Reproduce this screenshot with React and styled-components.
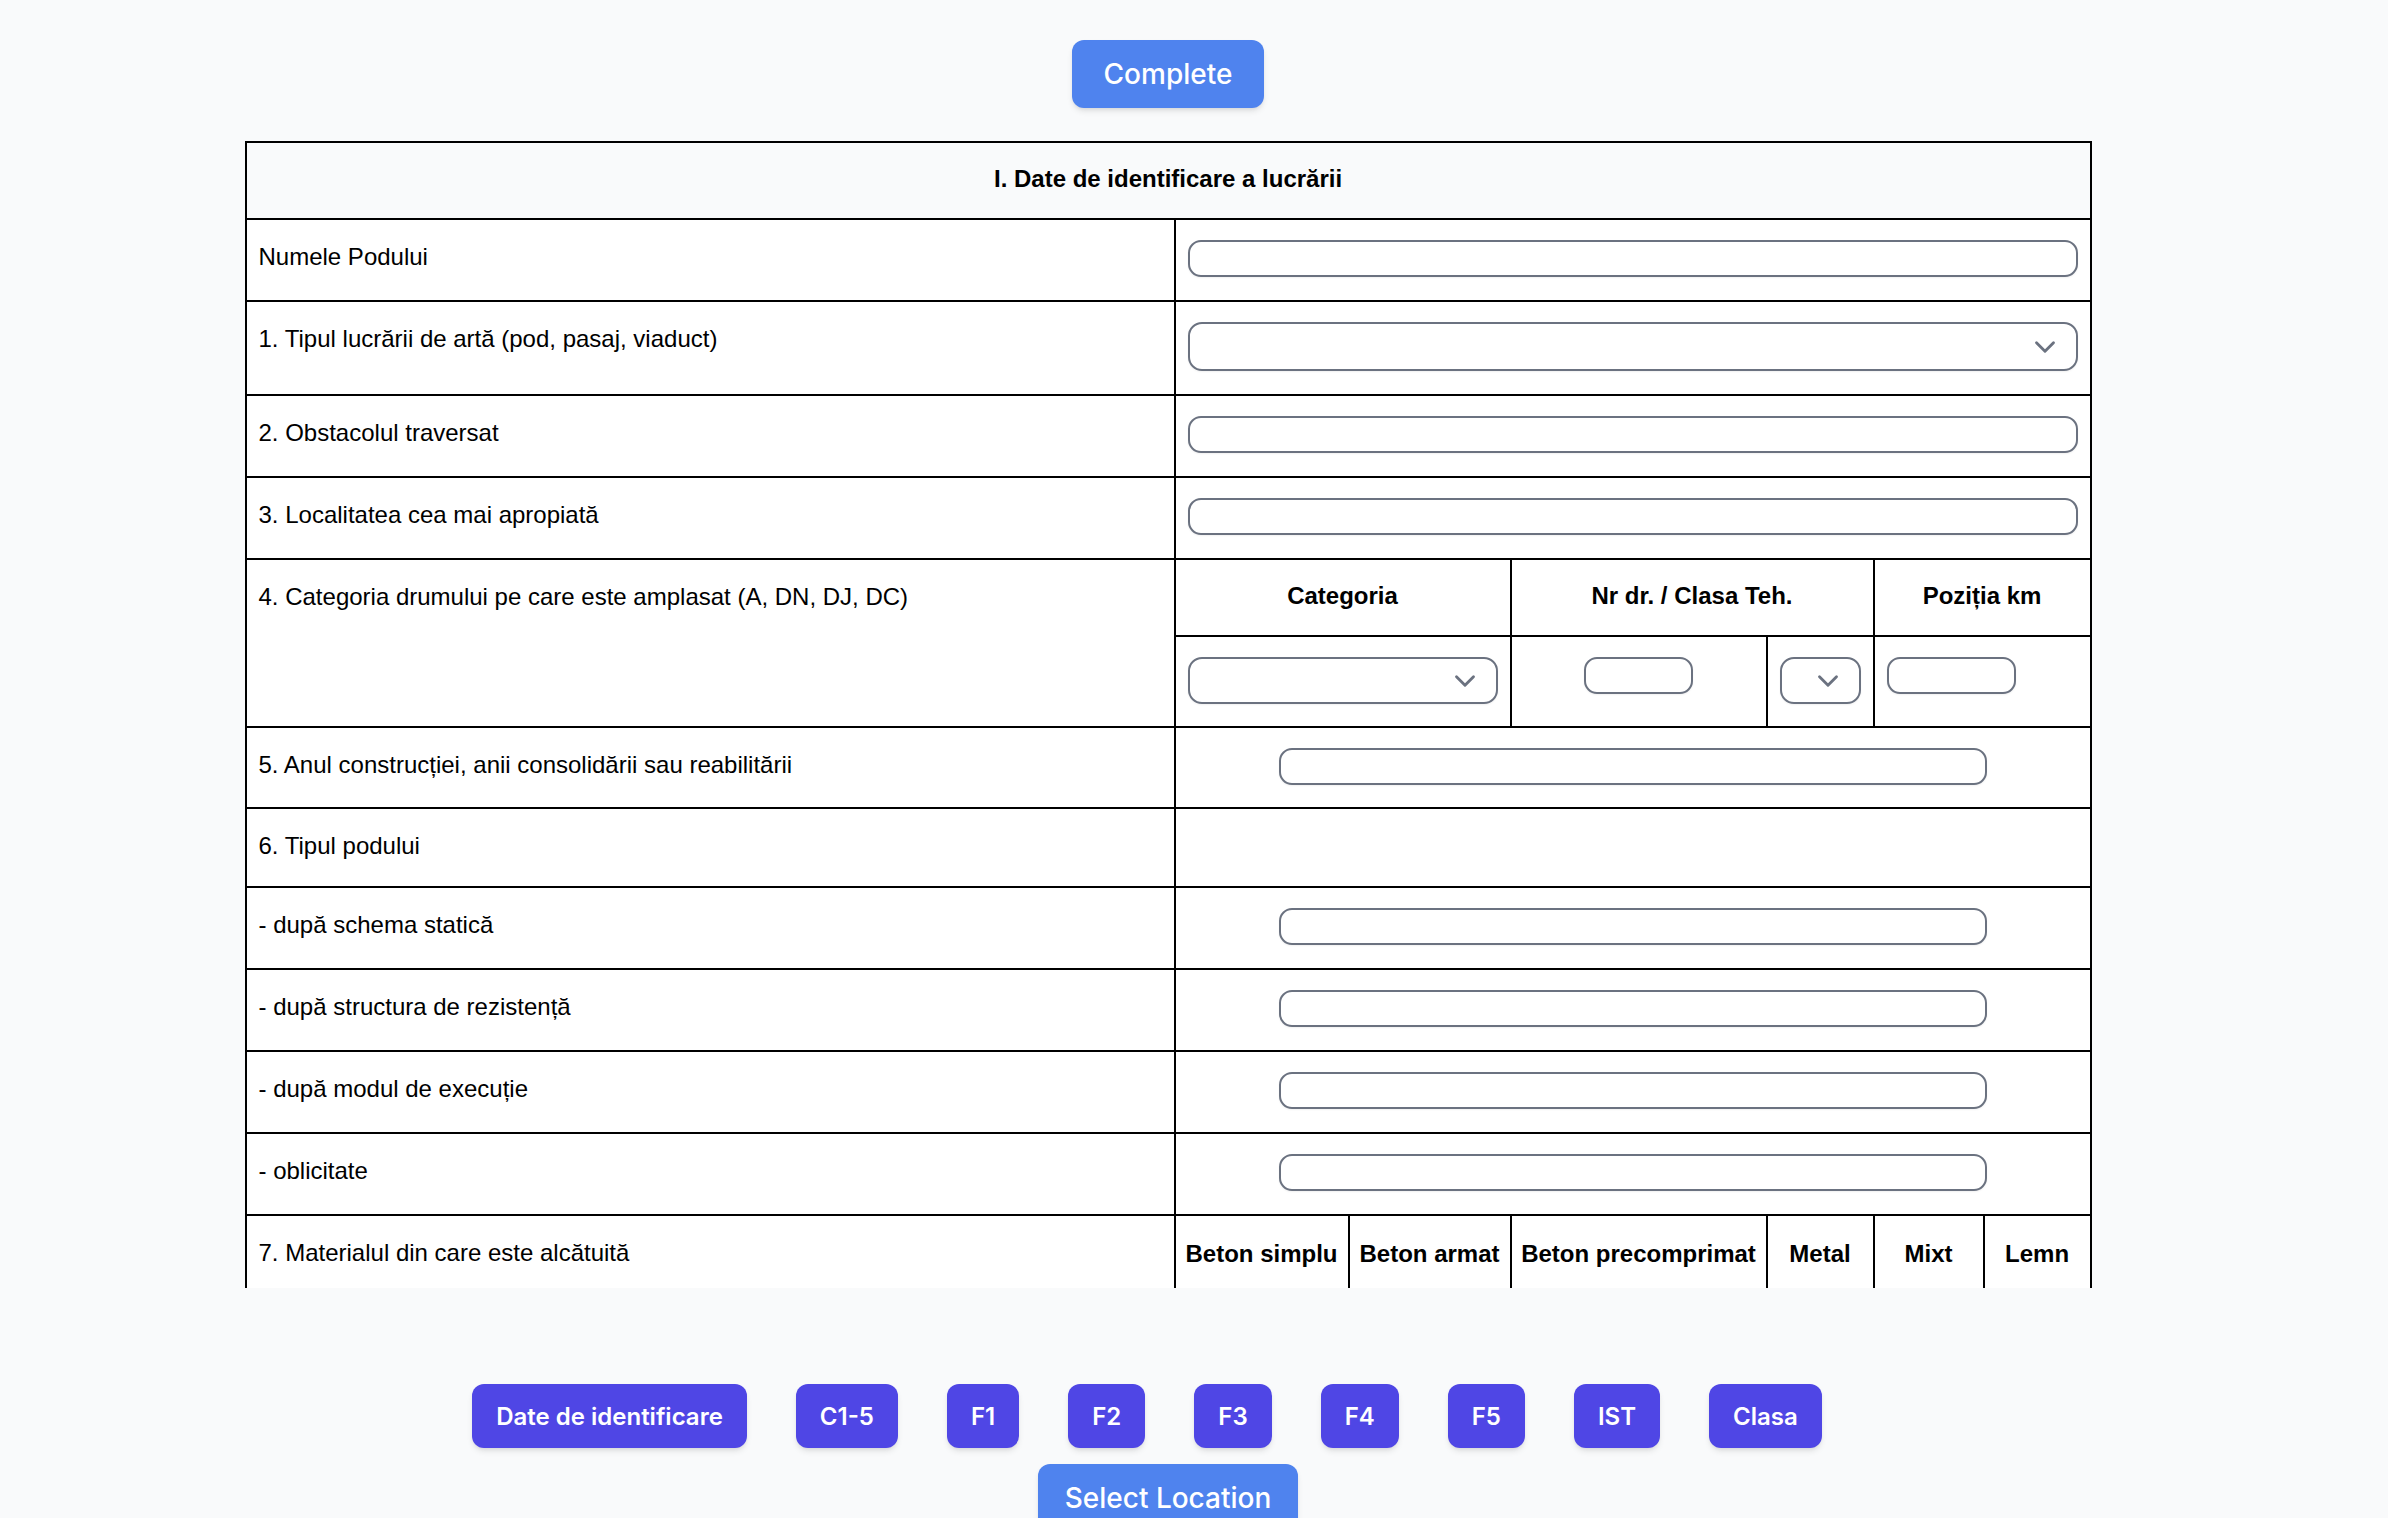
import React from "react";
import styled, { createGlobalStyle } from "styled-components";
import { ChevronDown } from "lucide-react";

const GlobalStyle = createGlobalStyle`
  body {
    margin: 0;
    background: #f9fafb;
    font-family: "Liberation Sans", Arial, sans-serif;
  }
  * {
    box-sizing: border-box;
  }
`;

const Page = styled.div`
  display: flex;
  flex-direction: column;
  align-items: center;
  padding: 40px 52px 0 0;
  min-height: 100vh;
`;

const PrimaryButton = styled.button`
  height: 68px;
  padding: 0 ${(p) => p.$padX || "32px"};
  border: none;
  border-radius: 12px;
  background: #4f83ee;
  color: #fff;
  font-family: Inter, "Noto Sans", sans-serif;
  font-size: 28px;
  font-weight: 500;
  box-shadow: 0 4px 6px -1px rgba(0, 0, 0, 0.1), 0 2px 4px -2px rgba(0, 0, 0, 0.1);
  cursor: pointer;
  margin-top: ${(p) => p.$top || "0"};
`;

// scroll box around the form, the table is cut off at the bottom
const TableScroll = styled.div`
  margin-top: 32px;
  width: 1849px;
  height: 1148px;
  padding: 1px 2px 0 1px;
  overflow-y: auto;
  scrollbar-width: none;
  &::-webkit-scrollbar {
    display: none;
  }
`;

const FormTable = styled.table`
  width: 1845px;
  border-collapse: collapse;
  table-layout: fixed;
  background: #fff;
  font-family: "Liberation Sans", Arial, sans-serif;
  font-size: 24px;
  color: #000;
`;

const Th = styled.th`
  border: 2px solid #000;
  padding: ${(p) => (p.$tight ? "20px 4px 22px" : "19px 12px 22px")};
  line-height: 34px;
  font-weight: 700;
  text-align: center;
  white-space: nowrap;
  background: ${(p) => (p.$shade ? "#f9fafb" : "#fff")};
`;

const Td = styled.td`
  border: 2px solid #000;
  padding: ${(p) => (p.$compact ? "20px 12px 22px" : "20px 12px 23px")};
  line-height: 34px;
  vertical-align: top;
  text-align: left;
`;

const TextInput = styled.input`
  display: block;
  width: ${(p) => p.$w || "100%"};
  height: 37px;
  margin: ${(p) => (p.$center ? "0 auto" : "0")};
  border: 2px solid #6b7280;
  border-radius: 13px;
  background: #fff;
  box-shadow: 0 1px 2px rgba(0, 0, 0, 0.06);
  font-size: 22px;
  padding: 0 12px;
  outline: none;
`;

const SelectWrap = styled.div`
  position: relative;
  width: 100%;
`;

const Select = styled.select`
  display: block;
  width: 100%;
  height: ${(p) => (p.$compact ? "47px" : "49px")};
  border: 2px solid #6b7280;
  border-radius: 14px;
  background: #fff;
  box-shadow: 0 1px 2px rgba(0, 0, 0, 0.06);
  appearance: none;
  -webkit-appearance: none;
  font-size: 22px;
  padding: 0 12px;
  outline: none;
`;

const Chevron = styled(ChevronDown)`
  position: absolute;
  right: 16px;
  top: 50%;
  transform: translateY(-50%);
  color: #6b7280;
  pointer-events: none;
`;

const NavRow = styled.div`
  display: flex;
  gap: 49px;
  margin-top: 96px;
  padding-right: 42px;
`;

const NavButton = styled.button`
  height: 64px;
  padding: 0 24px;
  border: none;
  border-radius: 12px;
  background: #4f46e5;
  color: #fff;
  font-family: Inter, "Noto Sans", sans-serif;
  font-size: 24px;
  font-weight: 600;
  box-shadow: 0 4px 6px -1px rgba(0, 0, 0, 0.1), 0 2px 4px -2px rgba(0, 0, 0, 0.1);
  cursor: pointer;
`;

const Dropdown = ({ compact }) => (
  <SelectWrap>
    <Select defaultValue="" $compact={compact}>
      <option value=""></option>
    </Select>
    <Chevron size={34} strokeWidth={2} />
  </SelectWrap>
);

const simpleRows = ["2. Obstacolul traversat", "3. Localitatea cea mai apropiată"];

const typeRows = [
  "- după schema statică",
  "- după structura de rezistență",
  "- după modul de execuție",
  "- oblicitate",
];

const materials = [
  "Beton simplu",
  "Beton armat",
  "Beton precomprimat",
  "Metal",
  "Mixt",
  "Lemn",
];

const navItems = ["Date de identificare", "C1-5", "F1", "F2", "F3", "F4", "F5", "IST", "Clasa"];

export default function App() {
  return (
    <>
      <GlobalStyle />
      <Page>
        <PrimaryButton>Complete</PrimaryButton>

        <TableScroll>
          <FormTable>
            <colgroup>
              <col style={{ width: 929 }} />
              <col style={{ width: 174 }} />
              <col style={{ width: 162 }} />
              <col style={{ width: 256 }} />
              <col style={{ width: 107 }} />
              <col style={{ width: 110 }} />
              <col style={{ width: 107 }} />
            </colgroup>
            <tbody>
              <tr>
                <Th colSpan={7} $shade>
                  I. Date de identificare a lucrării
                </Th>
              </tr>
              <tr>
                <Td>Numele Podului</Td>
                <Td colSpan={6}>
                  <TextInput />
                </Td>
              </tr>
              <tr>
                <Td>1. Tipul lucrării de artă (pod, pasaj, viaduct)</Td>
                <Td colSpan={6}>
                  <Dropdown />
                </Td>
              </tr>
              {simpleRows.map((label) => (
                <tr key={label}>
                  <Td>{label}</Td>
                  <Td colSpan={6}>
                    <TextInput />
                  </Td>
                </tr>
              ))}
              <tr>
                <Td rowSpan={2}>4. Categoria drumului pe care este amplasat (A, DN, DJ, DC)</Td>
                <Th colSpan={2}>Categoria</Th>
                <Th colSpan={2}>Nr dr. / Clasa Teh.</Th>
                <Th colSpan={2}>Poziția km</Th>
              </tr>
              <tr>
                <Td colSpan={2} $compact>
                  <Dropdown compact />
                </Td>
                <Td $compact>
                  <TextInput $w="109px" $center />
                </Td>
                <Td $compact>
                  <Dropdown compact />
                </Td>
                <Td colSpan={2} $compact>
                  <TextInput $w="129px" />
                </Td>
              </tr>
              <tr>
                <Td $compact>5. Anul construcției, anii consolidării sau reabilitării</Td>
                <Td colSpan={6} $compact>
                  <TextInput $w="708px" $center />
                </Td>
              </tr>
              <tr>
                <Td>6. Tipul podului</Td>
                <Td colSpan={6}></Td>
              </tr>
              {typeRows.map((label) => (
                <tr key={label}>
                  <Td>{label}</Td>
                  <Td colSpan={6}>
                    <TextInput $w="708px" $center />
                  </Td>
                </tr>
              ))}
              <tr>
                <Td>7. Materialul din care este alcătuită</Td>
                {materials.map((m) => (
                  <Th key={m} $tight>
                    {m}
                  </Th>
                ))}
              </tr>
            </tbody>
          </FormTable>
        </TableScroll>

        <NavRow>
          {navItems.map((item) => (
            <NavButton key={item}>{item}</NavButton>
          ))}
        </NavRow>

        <PrimaryButton $top="16px" $padX="27px">
          Select Location
        </PrimaryButton>
      </Page>
    </>
  );
}
